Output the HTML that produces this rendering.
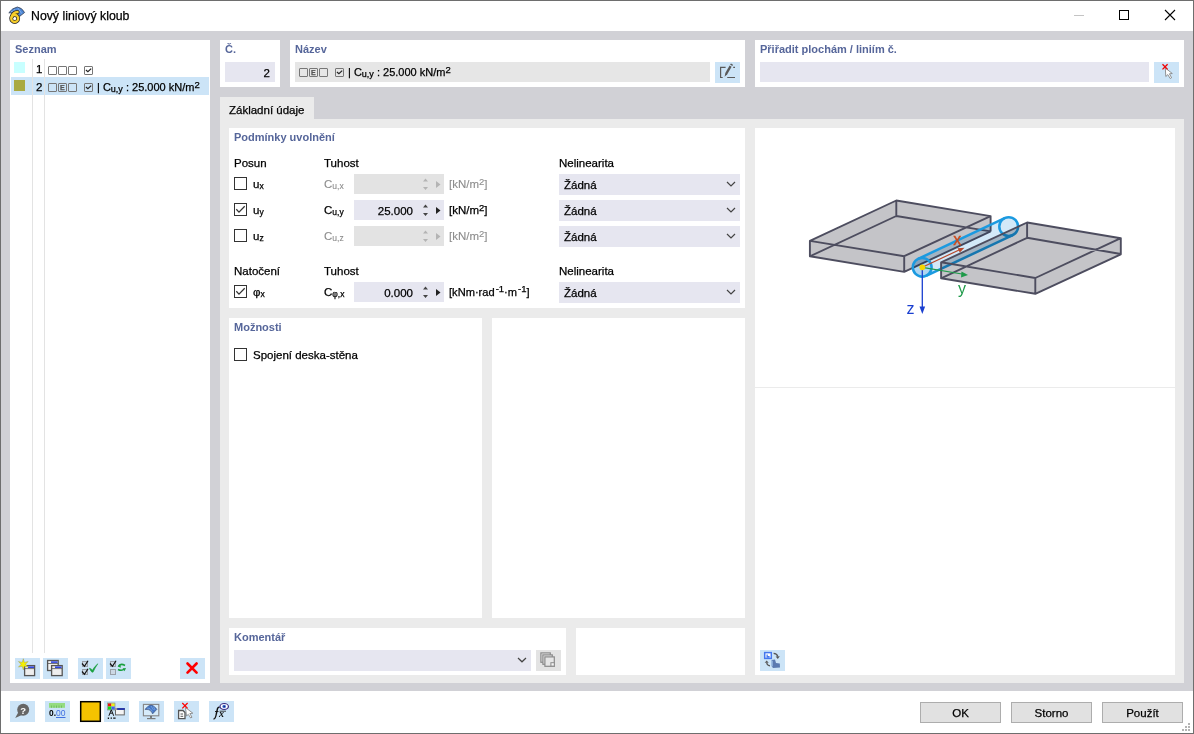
<!DOCTYPE html>
<html><head><meta charset="utf-8">
<style>
*{margin:0;padding:0;box-sizing:border-box}
html,body{width:1194px;height:734px;overflow:hidden;background:#fff}
body{position:relative;font-family:"Liberation Sans",sans-serif;font-size:11.5px;color:#000;-webkit-text-stroke:0.25px currentColor}
.a{position:absolute}
.t{position:absolute;white-space:nowrap;line-height:1}
.w{background:#fff}
.hd{color:#56669a;font-weight:bold;font-size:11px;-webkit-text-stroke:0}
.inp{background:#e6e6f0}
.dis{background:#e3e3e3}
.ib{background:#cce4f7}
.gr{color:#8c8c8c;-webkit-text-stroke:0.1px #8c8c8c}

.bx{position:absolute;width:9px;height:9px;border:1px solid #777;border-radius:1px}
.bx.e::after{content:"E";position:absolute;left:1px;top:0px;font-size:7px;line-height:7px;color:#555;font-weight:bold}
.sb{font-size:9px;position:relative;top:1px}
.sp{font-size:9.5px;position:relative;top:-3.5px}

.cb{position:absolute;width:13px;height:13px;border:1px solid #333;background:#fff}
.sb2{font-size:8.5px;position:relative;top:0.5px}
svg{-webkit-text-stroke:0}
sub,sup{font-size:8px;line-height:0}
</style></head><body>
<!-- window border -->
<div class="a" style="left:0;top:0;width:1194px;height:734px;border:1px solid #6e6e6e"></div>
<!-- title bar -->
<div class="t" style="left:31px;top:10px;font-size:12.3px">Nový liniový kloub</div>
<!-- gray area -->
<div class="a" style="left:1px;top:31px;width:1192px;height:660px;background:#d1d1d6"></div>

<!-- left list panel -->
<div class="a w" style="left:10px;top:40px;width:200px;height:643px"></div>
<div class="t hd" style="left:15px;top:44px">Seznam</div>


<!-- list rows -->
<div class="a" style="left:11px;top:77px;width:198px;height:18px;background:#cce4f7"></div>
<div class="a" style="left:32px;top:59px;width:1px;height:594px;background:#e3e3e3"></div>
<div class="a" style="left:44px;top:59px;width:1px;height:594px;background:#e3e3e3"></div>
<div class="a" style="left:14px;top:62px;width:11px;height:11px;background:#c8ffff"></div>
<div class="a" style="left:14px;top:80px;width:11px;height:11px;background:#a9aa42"></div>
<div class="t" style="left:36px;top:64px;font-size:11.5px">1</div>
<div class="t" style="left:36px;top:82px;font-size:11.5px">2</div>
<span class="bx" style="left:48px;top:66px"></span><span class="bx" style="left:58px;top:66px"></span><span class="bx" style="left:68px;top:66px"></span><span class="bx" style="left:84px;top:66px"><svg class="a" style="left:0;top:0" width="7" height="7"><path d="M0.9 3 L2.9 4.7 L6.2 1.6" fill="none" stroke="#222" stroke-width="1.2"/></svg></span>
<span class="bx" style="left:48px;top:83px"></span><span class="bx e" style="left:58px;top:83px"></span><span class="bx" style="left:68px;top:83px"></span><span class="bx" style="left:84px;top:83px"><svg class="a" style="left:0;top:0" width="7" height="7"><path d="M0.9 3 L2.9 4.7 L6.2 1.6" fill="none" stroke="#222" stroke-width="1.2"/></svg></span>
<div class="t" style="left:97px;top:82px;font-size:11px">| C<span class="sb">u,y</span> : 25.000 kN/m<span class="sp">2</span></div>

<!-- No panel -->
<div class="a w" style="left:220px;top:40px;width:60px;height:47px"></div>
<div class="t hd" style="left:225px;top:44px">Č.</div>
<div class="a inp" style="left:225px;top:62px;width:50px;height:20px"></div>
<div class="t" style="left:225px;top:68px;width:45px;text-align:right">2</div>

<!-- Name panel -->
<div class="a w" style="left:290px;top:40px;width:455px;height:47px"></div>
<div class="t hd" style="left:295px;top:44px">Název</div>
<div class="a" style="left:295px;top:62px;width:415px;height:20px;background:#e6e6e6"></div>
<div class="a ib" style="left:715px;top:62px;width:25px;height:21px"></div>
<span class="bx" style="left:299px;top:68px"></span><span class="bx e" style="left:309px;top:68px"></span><span class="bx" style="left:319px;top:68px"></span><span class="bx" style="left:335px;top:68px"><svg class="a" style="left:0;top:0" width="7" height="7"><path d="M0.9 3 L2.9 4.7 L6.2 1.6" fill="none" stroke="#222" stroke-width="1.2"/></svg></span>
<div class="t" style="left:348px;top:67px;font-size:11px">| C<span class="sb">u,y</span> : 25.000 kN/m<span class="sp">2</span></div>


<!-- assign panel -->
<div class="a w" style="left:755px;top:40px;width:429px;height:47px"></div>
<div class="t hd" style="left:760px;top:44px">Přiřadit plochám / liniím č.</div>
<div class="a inp" style="left:760px;top:62px;width:389px;height:20px"></div>
<div class="a ib" style="left:1154px;top:62px;width:25px;height:21px"></div>

<!-- tab -->
<div class="a" style="left:220px;top:97px;width:94px;height:22px;background:#ebebeb"></div>
<div class="t" style="left:229px;top:105px">Základní údaje</div>
<div class="a" style="left:220px;top:119px;width:964px;height:564px;background:#ebebeb"></div>

<!-- Podminky panel -->
<div class="a w" style="left:229px;top:128px;width:516px;height:180px"></div>
<div class="t hd" style="left:234px;top:132px">Podmínky uvolnění</div>


<div class="t" style="left:234px;top:158px">Posun</div>
<div class="t" style="left:324px;top:158px">Tuhost</div>
<div class="t" style="left:559px;top:158px">Nelinearita</div>

<span class="cb" style="left:234px;top:177px"></span>
<div class="t" style="left:253px;top:179px">u<span class="sb2">x</span></div>
<div class="t gr" style="left:324px;top:179px">C<span class="sb2">u,x</span></div>
<div class="a dis" style="left:354px;top:174px;width:90px;height:20px"></div>
<div class="t" style="left:354px;top:180px;width:59px;text-align:right"></div>
<svg class="a" style="left:422px;top:178px" width="7" height="13"><path d="M1 3.5 L3.5 0.5 L6 3.5Z M1 9 L3.5 12 L6 9Z" fill="#b4b4b4"/></svg>
<svg class="a" style="left:436px;top:181px" width="5" height="8"><path d="M0 0 L4.5 3.5 L0 7Z" fill="#b4b4b4"/></svg>
<div class="t gr" style="left:449px;top:179px">[kN/m<span class="sp">2</span>]</div>
<div class="a inp" style="left:559px;top:174px;width:181px;height:21px"></div>
<div class="t" style="left:564px;top:180px">Žádná</div>
<svg class="a" style="left:726px;top:181px" width="10" height="6"><path d="M1 1 L5 5 L9 1" fill="none" stroke="#444" stroke-width="1.2"/></svg>

<span class="cb" style="left:234px;top:203px"><svg class="a" style="left:0;top:0" width="11" height="11"><path d="M1.3 5.3 L4 8.1 L9.7 2.3" fill="none" stroke="#333" stroke-width="1.3"/></svg></span>
<div class="t" style="left:253px;top:205px">u<span class="sb2">y</span></div>
<div class="t" style="left:324px;top:205px">C<span class="sb2">u,y</span></div>
<div class="a inp" style="left:354px;top:200px;width:90px;height:20px"></div>
<div class="t" style="left:354px;top:206px;width:59px;text-align:right">25.000</div>
<svg class="a" style="left:422px;top:204px" width="7" height="13"><path d="M1 3.5 L3.5 0.5 L6 3.5Z M1 9 L3.5 12 L6 9Z" fill="#444"/></svg>
<svg class="a" style="left:436px;top:207px" width="5" height="8"><path d="M0 0 L4.5 3.5 L0 7Z" fill="#222"/></svg>
<div class="t" style="left:449px;top:205px">[kN/m<span class="sp">2</span>]</div>
<div class="a inp" style="left:559px;top:200px;width:181px;height:21px"></div>
<div class="t" style="left:564px;top:206px">Žádná</div>
<svg class="a" style="left:726px;top:207px" width="10" height="6"><path d="M1 1 L5 5 L9 1" fill="none" stroke="#444" stroke-width="1.2"/></svg>

<span class="cb" style="left:234px;top:229px"></span>
<div class="t" style="left:253px;top:231px">u<span class="sb2">z</span></div>
<div class="t gr" style="left:324px;top:231px">C<span class="sb2">u,z</span></div>
<div class="a dis" style="left:354px;top:226px;width:90px;height:20px"></div>
<div class="t" style="left:354px;top:232px;width:59px;text-align:right"></div>
<svg class="a" style="left:422px;top:230px" width="7" height="13"><path d="M1 3.5 L3.5 0.5 L6 3.5Z M1 9 L3.5 12 L6 9Z" fill="#b4b4b4"/></svg>
<svg class="a" style="left:436px;top:233px" width="5" height="8"><path d="M0 0 L4.5 3.5 L0 7Z" fill="#b4b4b4"/></svg>
<div class="t gr" style="left:449px;top:231px">[kN/m<span class="sp">2</span>]</div>
<div class="a inp" style="left:559px;top:226px;width:181px;height:21px"></div>
<div class="t" style="left:564px;top:232px">Žádná</div>
<svg class="a" style="left:726px;top:233px" width="10" height="6"><path d="M1 1 L5 5 L9 1" fill="none" stroke="#444" stroke-width="1.2"/></svg>

<div class="t" style="left:234px;top:266px">Natočení</div>
<div class="t" style="left:324px;top:266px">Tuhost</div>
<div class="t" style="left:559px;top:266px">Nelinearita</div>

<span class="cb" style="left:234px;top:285px"><svg class="a" style="left:0;top:0" width="11" height="11"><path d="M1.3 5.3 L4 8.1 L9.7 2.3" fill="none" stroke="#333" stroke-width="1.3"/></svg></span>
<div class="t" style="left:253px;top:287px">φ<span class="sb2">x</span></div>
<div class="t" style="left:324px;top:287px">C<span class="sb2">φ,x</span></div>
<div class="a inp" style="left:354px;top:282px;width:90px;height:20px"></div>
<div class="t" style="left:354px;top:288px;width:59px;text-align:right">0.000</div>
<svg class="a" style="left:422px;top:286px" width="7" height="13"><path d="M1 3.5 L3.5 0.5 L6 3.5Z M1 9 L3.5 12 L6 9Z" fill="#444"/></svg>
<svg class="a" style="left:436px;top:289px" width="5" height="8"><path d="M0 0 L4.5 3.5 L0 7Z" fill="#222"/></svg>
<div class="t" style="left:449px;top:287px;font-size:11.1px">[kNm·rad<span class="sp" style="margin-left:1px;top:-4px">-1</span>·m<span class="sp" style="margin-left:1px;top:-4px">-1</span>]</div>
<div class="a inp" style="left:559px;top:282px;width:181px;height:21px"></div>
<div class="t" style="left:564px;top:288px">Žádná</div>
<svg class="a" style="left:726px;top:289px" width="10" height="6"><path d="M1 1 L5 5 L9 1" fill="none" stroke="#444" stroke-width="1.2"/></svg>


<!-- picture panel -->
<div class="a w" style="left:755px;top:128px;width:420px;height:547px"></div>

<svg class="a" style="left:755px;top:128px" width="420" height="259" viewBox="755 128 420 259">
<g stroke="#4d4d5f" stroke-width="1.9" stroke-linejoin="round" fill="none">
<path d="M809.9 240.9 L896.3 200.5 L990.6 216.1 L990.6 231.4 L904.2 271.9 L809.9 256.3Z" fill="#c4c4c8" stroke="none"/>
<path d="M809.9 240.9 L896.3 200.5 L990.6 216.1 L904.2 256.2Z M809.9 240.9 L809.9 256.3 L904.2 271.9 L904.2 256.2 M896.3 200.5 L896.3 216 L809.9 256.3 M896.3 216 L990.6 231.4 M990.6 216.1 L990.6 231.4 M904.2 271.9 L990.6 231.4"/>
</g>
<g style="mix-blend-mode:multiply">
<path d="M918.1 258.9 L1004.7 218.1 A9.4 9.4 0 0 1 1012.7 235.1 L926.1 275.9 A9.4 9.4 0 0 1 918.1 258.9Z" fill="#d3e9f8"/>
</g>
<path d="M926.1 275.9 L1012.7 235.1" stroke="#1b9ae0" stroke-width="2.5" fill="none"/>
<path d="M918.1 258.9 L1004.7 218.1" stroke="#1b9ae0" stroke-width="2.5" fill="none"/>
<circle cx="1008.7" cy="226.6" r="9.4" fill="none" stroke="#1b9ae0" stroke-width="2.5"/>
<g style="mix-blend-mode:multiply">
<path d="M941.1 262.3 L1027.1 222.5 L1120.8 238.2 L1120.8 254.3 L1035.3 293.8 L941.1 278.3Z" fill="#c4c4c8"/>
</g>
<g stroke="#4d4d5f" stroke-width="1.9" stroke-linejoin="round" fill="none">
<path d="M941.1 262.3 L1027.1 222.5 L1120.8 238.2 L1035.3 278Z M941.1 262.3 L941.1 278.3 L1035.3 293.8 L1035.3 278 M1035.3 293.8 L1120.8 254.3 L1120.8 238.2 M1027.1 222.5 L1027.1 237.8 L941.1 278.3 M1027.1 237.8 L1120.8 254"/>
</g>
<g style="mix-blend-mode:multiply"><circle cx="922.2" cy="267.3" r="9.4" fill="#d3e9f8"/></g><circle cx="922.2" cy="267.3" r="9.4" fill="none" stroke="#1b9ae0" stroke-width="2.5"/>
<path d="M922.3 267.3 L959 250" stroke="#b8482a" stroke-width="1.2"/>
<path d="M964.5 247.8 L957.5 248.3 L959.8 252.6Z" fill="#b8482a"/>
<path d="M922.3 267.3 L962 274" stroke="#1f9a4a" stroke-width="1.2"/>
<path d="M968 275 L961.5 271.5 L961 277.5Z" fill="#1f9a4a"/>
<path d="M922.3 267.3 L922.3 307" stroke="#1a3fd0" stroke-width="1.3"/>
<path d="M922.3 314 L919.5 306.5 L925.1 306.5Z" fill="#1a3fd0"/>
<circle cx="922.3" cy="267.3" r="2.9" fill="#f7d500"/>
<text x="953.3" y="244.5" font-family="Liberation Sans" font-size="16" fill="#cc4a1c" stroke="#cc4a1c" stroke-width="0.4">x</text>
<text x="958" y="294" font-family="Liberation Sans" font-size="16" fill="#1f9a4a">y</text>
<text x="906.5" y="313.5" font-family="Liberation Sans" font-size="16" fill="#1a3fd0">z</text>
</svg>
<div class="a" style="left:755px;top:387px;width:420px;height:1px;background:#ebebeb"></div>

<!-- moznosti -->
<div class="a w" style="left:229px;top:318px;width:253px;height:300px"></div>
<div class="t hd" style="left:234px;top:322px">Možnosti</div>
<span class="cb" style="left:234px;top:348px"></span>
<div class="t" style="left:253px;top:350px">Spojení deska-stěna</div>

<div class="a w" style="left:492px;top:318px;width:253px;height:300px"></div>

<!-- komentar -->
<div class="a w" style="left:229px;top:628px;width:337px;height:47px"></div>
<div class="t hd" style="left:234px;top:632px">Komentář</div>
<div class="a inp" style="left:234px;top:650px;width:297px;height:21px"></div>
<div class="a dis" style="left:536px;top:650px;width:25px;height:21px"></div>
<div class="a w" style="left:576px;top:628px;width:169px;height:47px"></div>

<!-- bottom buttons -->
<div class="a" style="left:920px;top:702px;width:81px;height:21px;background:#e1e1e1;border:1px solid #adadad"></div>
<div class="t" style="left:920px;top:708px;width:81px;text-align:center">OK</div>
<div class="a" style="left:1011px;top:702px;width:81px;height:21px;background:#e1e1e1;border:1px solid #adadad"></div>
<div class="t" style="left:1011px;top:708px;width:81px;text-align:center">Storno</div>
<div class="a" style="left:1102px;top:702px;width:81px;height:21px;background:#e1e1e1;border:1px solid #adadad"></div>
<div class="t" style="left:1102px;top:708px;width:81px;text-align:center">Použít</div>
<div class="a ib" style="left:15px;top:658px;width:25px;height:21px"></div>
<div class="a ib" style="left:43px;top:658px;width:25px;height:21px"></div>
<div class="a ib" style="left:78px;top:658px;width:25px;height:21px"></div>
<div class="a ib" style="left:106px;top:658px;width:25px;height:21px"></div>
<div class="a ib" style="left:180px;top:658px;width:25px;height:21px"></div>
<div class="a ib" style="left:10px;top:701px;width:25px;height:21px"></div>
<div class="a ib" style="left:45px;top:701px;width:25px;height:21px"></div>
<div class="a ib" style="left:104px;top:701px;width:25px;height:21px"></div>
<div class="a ib" style="left:139px;top:701px;width:25px;height:21px"></div>
<div class="a ib" style="left:174px;top:701px;width:25px;height:21px"></div>
<div class="a ib" style="left:209px;top:701px;width:25px;height:21px"></div>
<div class="a ib" style="left:760px;top:650px;width:25px;height:21px"></div>

<svg class="a" style="left:0;top:0" width="1194" height="734" viewBox="0 0 1194 734">
<!-- title icon -->
<path d="M8.8 12.8 Q12.5 7.8 17.4 7 Q22 7.6 24.6 12.5 L19.6 16.4 Q17.8 12.6 13.8 13 Z" fill="#4d86d6" stroke="#3b4252" stroke-width="0.8"/>
<path d="M11.5 11.8 Q15 9.5 19.5 10.5 M14 9 L18.5 14.5 M17.8 8 L21.8 13.6 M11 11 L14.6 13" stroke="#a8cdf4" stroke-width="0.6" fill="none"/>
<path d="M17.6 12 Q12.8 12.3 11.6 17.2" stroke="#2a2a2a" stroke-width="3.8" fill="none" stroke-linecap="round"/>
<circle cx="14.7" cy="18.5" r="3.5" fill="none" stroke="#2a2a2a" stroke-width="3.8"/>
<path d="M17.6 12 Q12.8 12.3 11.6 17.2" stroke="#f6cd2a" stroke-width="2.3" fill="none" stroke-linecap="round"/>
<circle cx="14.7" cy="18.5" r="3.5" fill="none" stroke="#f6cd2a" stroke-width="2.3"/>
<circle cx="14.7" cy="18.5" r="1" fill="#fff"/>
<!-- window controls -->
<path d="M1074 15.5 H1084" stroke="#c4c4c4" stroke-width="1"/>
<rect x="1119.5" y="10.5" width="9" height="9" fill="none" stroke="#000" stroke-width="1"/>
<path d="M1165 10 L1175 20 M1175 10 L1165 20" stroke="#000" stroke-width="1.1"/>
<!-- edit name icon -->
<path d="M725.6 67.4 H720.6 V77.5 H722.7 M727.2 77.5 H735 M733.2 67.4 H735" stroke="#5a5a5a" stroke-width="1.2" fill="none"/>
<path d="M724.6 76.8 L725.3 73 L729.6 65.6 L731.6 66.8 L727.3 74.2Z" fill="#5a5a5a"/>
<path d="M730 64.6 L731 63.5 L733 64.7 L732.4 66" fill="#5a5a5a"/>
<!-- assign cursor icon -->
<path d="M1165.3 68 L1165.8 76.5 L1167.8 74.6 L1170.2 78.5 L1171.6 77.7 L1169.4 73.8 L1172.3 73.5Z" fill="#fff" stroke="#7a7a7a" stroke-width="0.8"/>
<path d="M1162.5 64.3 L1167.6 69.4 M1167.6 64.3 L1162.5 69.4" stroke="#f00000" stroke-width="1.3"/>
<!-- list btn1: new -->
<rect x="24.6" y="665.6" width="10" height="10" fill="#eee" stroke="#555" stroke-width="1.3"/>
<rect x="28" y="666.4" width="6" height="1.6" fill="#3046e0"/>
<path d="M24.6 668.6 H34.6" stroke="#555" stroke-width="0.8"/>
<path d="M23.30 658.70 L22.20 662.39 L18.45 661.50 L21.10 664.30 L18.45 667.10 L22.20 666.21 L23.30 669.90 L24.40 666.21 L28.15 667.10 L25.50 664.30 L28.15 661.50 L24.40 662.39Z" fill="#f5f000" stroke="#8a8a50" stroke-width="0.4"/>

<!-- list btn2: copy -->
<rect x="47.6" y="660.5" width="10.6" height="10" fill="#f2f2f2" stroke="#555" stroke-width="1.3"/>
<rect x="51" y="661.3" width="6.5" height="1.6" fill="#3046e0"/><path d="M47.6 663.5 H58.2" stroke="#555" stroke-width="0.8"/>
<rect x="51.6" y="665.6" width="10.6" height="10" fill="#eee" stroke="#555" stroke-width="1.3"/>
<rect x="55" y="666.4" width="6.5" height="1.6" fill="#3046e0"/><path d="M51.6 668.6 H62.2" stroke="#555" stroke-width="0.8"/>
<!-- list btn3 -->
<rect x="82.5" y="661.5" width="5" height="5" fill="#ccd8e4" stroke="#9aa0a8" stroke-width="1"/>
<rect x="82.5" y="669.5" width="5" height="5" fill="#ccd8e4" stroke="#9aa0a8" stroke-width="1"/>
<path d="M82 663.5 L84.5 666.3 L88 660.8 M82 671.5 L84.5 674.3 L88 668.8" stroke="#111" stroke-width="1.2" fill="none"/>
<path d="M89.3 668.2 Q91 668.4 92.4 670.2 Q94.5 666.5 97.8 663.8 Q95.2 667.5 93 672.2 Q91.8 672.3 91 671.2Z" fill="#1aa040" stroke="#1aa040" stroke-width="0.6"/>
<!-- list btn4 -->
<rect x="110.5" y="661.5" width="5" height="5" fill="#ccd8e4" stroke="#9aa0a8" stroke-width="1"/>
<rect x="110.5" y="669.5" width="5" height="5" fill="#ccd8e4" stroke="#9aa0a8" stroke-width="1"/>
<path d="M110 663.5 L112.5 666.3 L116 660.8" stroke="#111" stroke-width="1.2" fill="none"/>
<path d="M125 665.5 Q121 663 118.5 666" stroke="#1aa040" stroke-width="1.5" fill="none"/>
<path d="M117.5 666.5 L120.5 664 L120.8 667.8Z" fill="#1aa040"/>
<path d="M118 669.5 Q122 671.5 124.5 668.8" stroke="#1aa040" stroke-width="1.5" fill="none"/>
<path d="M126 668 L122.6 668.5 L124.6 671.3Z" fill="#1aa040"/>
<!-- delete -->
<path d="M187.5 663.5 L196.6 672.6 M196.6 663.5 L187.5 672.6" stroke="#f00" stroke-width="2.6" stroke-linecap="round"/>
<!-- help -->
<circle cx="23.2" cy="709.8" r="6" fill="#666"/>
<path d="M15.2 718 L19 711 L23 714.5Z" fill="#666"/>
<text x="20.2" y="713.6" font-family="Liberation Sans" font-weight="bold" font-size="9.5" fill="#fff">?</text>
<!-- 0.00 -->
<rect x="49" y="703" width="16" height="4.8" fill="#95dc80"/>
<path d="M51.5 705.5 V707.8 M54 705.5 V707.8 M56.5 705.5 V707.8 M59 705.5 V707.8 M61.5 705.5 V707.8" stroke="#6cb858" stroke-width="0.8"/>
<text x="49" y="716" font-family="Liberation Sans" font-weight="bold" font-size="9" fill="#000" textLength="7" lengthAdjust="spacingAndGlyphs">0.</text>
<text x="56" y="716" font-family="Liberation Sans" font-size="9" fill="#4070e0" textLength="9.5" lengthAdjust="spacingAndGlyphs">00</text>
<path d="M56 717.5 H65.5" stroke="#4070e0" stroke-width="1"/>
<!-- yellow color square -->
<rect x="80.7" y="701.7" width="19.6" height="19.6" fill="#f5c300" stroke="#000" stroke-width="1.5"/>
<!-- A btn -->
<rect x="108" y="703.3" width="3.4" height="3.2" fill="#f01010"/><rect x="111.4" y="703.3" width="3.4" height="3.2" fill="#f0f010"/>
<rect x="108" y="706.5" width="3.4" height="3.2" fill="#10e010"/><rect x="111.4" y="706.5" width="3.4" height="3.2" fill="#4060f0"/>
<rect x="107.6" y="703" width="7.4" height="7" fill="none" stroke="#7a8a70" stroke-width="0.6"/>
<path d="M108.9 715.8 L111.3 709.8 L113.7 715.8 M110.1 713.2 H112.5" stroke="#111" stroke-width="1" fill="none"/>
<path d="M108.4 717.4 V719 M110.6 718.2 H112 M113.2 718.2 H115.6" stroke="#111" stroke-width="1.3"/>
<rect x="115.5" y="708.5" width="8.8" height="6.4" fill="#f4f4f4" stroke="#666" stroke-width="1"/>
<rect x="115" y="708" width="9.8" height="2" fill="#2838a8"/>
<rect x="115" y="708" width="2.2" height="2" fill="#999"/>
<!-- monitor -->
<rect x="143.4" y="704.4" width="15.4" height="11.4" fill="#d6ebfa" stroke="#858585" stroke-width="1.1"/>
<path d="M144.9 709.4 Q148.5 705.2 151 705.1 Q154 705.3 156.9 709.3 L152.6 713.9 Q151.5 710.4 148.3 709.6Z" fill="#4676c4" stroke="#3a4f78" stroke-width="0.6"/><path d="M147 708 L150 708.6 L152.5 711.5 M151 706 L153.5 710 M153.5 706.5 L155 710" stroke="#8ab8f0" stroke-width="0.6" fill="none"/>
<path d="M151 716 V718.3" stroke="#555" stroke-width="1.4"/><path d="M147 718.6 H155.5" stroke="#7a7a7a" stroke-width="1.2"/>
<!-- cursor doc -->
<path d="M178.6 710.5 H183 L185 712.5 V718.6 H178.6Z" fill="#fff" stroke="#555" stroke-width="1.3"/>
<path d="M180.5 714 H183 M180.5 716.3 H183.2" stroke="#555" stroke-width="1"/>
<path d="M185.5 707.5 L186.5 716 L188.3 714.4 L190.7 718 L192 717.2 L189.8 713.6 L192.8 713.2Z" fill="#fff" stroke="#7a7a7a" stroke-width="0.8"/>
<path d="M182.3 703 L187.6 708.4 M187.6 703 L182.3 708.4" stroke="#f00" stroke-width="1.2"/>
<!-- fx -->
<path d="M213.5 719 Q215.5 719 216.3 714 L217.5 708.5 Q218.2 706.8 219.6 707.3" stroke="#111" stroke-width="1.4" fill="none"/>
<path d="M215 711.5 H218.5" stroke="#111" stroke-width="0.9"/>
<text x="219" y="716.6" font-family="Liberation Serif" font-style="italic" font-weight="bold" font-size="10" fill="#111">x</text>
<path d="M219.6 711.2 H226" stroke="#111" stroke-width="0.8"/>
<ellipse cx="224.2" cy="706.5" rx="4.2" ry="3" fill="#fff" stroke="#3a2a80" stroke-width="1.2"/>
<circle cx="224.2" cy="706.5" r="1.8" fill="#3f6ad8"/>
<circle cx="224.2" cy="706.5" r="0.7" fill="#102050"/>
<!-- view btn -->
<rect x="764.7" y="652.6" width="6.6" height="5.8" fill="#fff" stroke="#4477ee" stroke-width="1.5"/>
<path d="M766.5 657.8 V654.5 H767.8 V656 H769.6 V657.8Z" fill="#4477ee"/>
<path d="M773.6 653.4 Q777 653.5 777.8 656.5" stroke="#555" stroke-width="1.2" fill="none"/>
<path d="M775.6 656.5 L777.8 659 L779.8 656.3Z" fill="#555"/>
<path d="M770 665.8 Q767 665.5 766.7 662.8" stroke="#555" stroke-width="1.2" fill="none"/>
<path d="M764.7 662.8 L766.7 660.5 L768.7 662.8Z" fill="#555"/>
<path d="M771.5 660 L775 659.5 L776 663 L779.8 663.5 L780 667.5 L773 668 L771.5 666Z" fill="#5b7ab0"/>
<path d="M771.5 660 L772.6 661 L772.6 666.6 L771.5 666Z" fill="#a8ccf0"/>
<!-- copy comment btn -->
<rect x="540.9" y="652.9" width="9.4" height="9.4" fill="#e6e6e6" stroke="#8a8a8a" stroke-width="1.2"/>
<rect x="542.9" y="654.9" width="9.4" height="9.4" fill="#e6e6e6" stroke="#8a8a8a" stroke-width="1.2"/>
<rect x="544.9" y="656.9" width="9.4" height="9.4" fill="#e6e6e6" stroke="#8a8a8a" stroke-width="1.2"/>
<rect x="550.9" y="662.7" width="3.4" height="3.4" fill="#f4f4f4" stroke="#8a8a8a" stroke-width="1"/>
<!-- komentar chevron -->
<path d="M518 658 L522 661.8 L526 658" stroke="#444" stroke-width="1.2" fill="none"/>
</svg>
<svg class="a" style="left:1180px;top:721px" width="12" height="12"><g fill="#b4b4b4"><rect x="8" y="2" width="2" height="2"/><rect x="5" y="5" width="2" height="2"/><rect x="8" y="5" width="2" height="2"/><rect x="2" y="8" width="2" height="2"/><rect x="5" y="8" width="2" height="2"/><rect x="8" y="8" width="2" height="2"/></g></svg>
</body></html>
